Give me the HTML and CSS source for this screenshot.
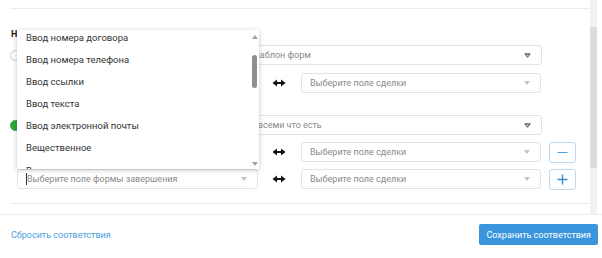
FILE: index.html
```html
<!DOCTYPE html>
<html>
<head>
    <title>Настройка соответствия полей</title>
    <link rel="stylesheet" href="styles.css">
</head>
<body>
    <div class="modal">
        <div class="modal-body">
            <div class="content">
                <div class="divider"></div>
                <h3 class="section-title">Настройка соответствия полей</h3>

                <div class="option-row">
                    <span class="radio"></span>
                    <span class="option-label">Шаблон формы</span>
                    <div class="select select-wide">
                        <span class="placeholder">Выберите шаблон форм</span>
                        <svg class="caret-outline" width="7" height="5" viewBox="0 0 7 5"><path d="M0.8 0.8 H6.2 L3.5 4.3 Z" fill="#bbb" stroke="#555" stroke-width="1" stroke-linejoin="round"/></svg>
                    </div>
                </div>

                <div class="map-row first">
                    <div class="select select-left">
                        <span class="placeholder">Выберите поле формы завершения</span>
                        <span class="caret"></span>
                    </div>
                    <svg class="link-arrow" width="14" height="8" viewBox="0 0 14 8"><path d="M4 4 H10" stroke="#111" stroke-width="2"/><path d="M0.5 4 L5 0.5 V7.5 Z M13.5 4 L9 0.5 V7.5 Z" fill="#111"/></svg>
                    <div class="select select-right">
                        <span class="placeholder">Выберите поле сделки</span>
                        <span class="caret"></span>
                    </div>
                </div>

                <div class="option-row second">
                    <span class="radio checked"></span>
                    <span class="option-label">Все поля</span>
                    <div class="select select-wide">
                        <span class="placeholder">Связать со всеми что есть</span>
                        <svg class="caret-outline" width="7" height="5" viewBox="0 0 7 5"><path d="M0.8 0.8 H6.2 L3.5 4.3 Z" fill="#bbb" stroke="#555" stroke-width="1" stroke-linejoin="round"/></svg>
                    </div>
                </div>

                <div class="map-row">
                    <div class="select select-left">
                        <span class="placeholder">Выберите поле формы завершения</span>
                        <span class="caret"></span>
                    </div>
                    <svg class="link-arrow" width="14" height="8" viewBox="0 0 14 8"><path d="M4 4 H10" stroke="#111" stroke-width="2"/><path d="M0.5 4 L5 0.5 V7.5 Z M13.5 4 L9 0.5 V7.5 Z" fill="#111"/></svg>
                    <div class="select select-right">
                        <span class="placeholder">Выберите поле сделки</span>
                        <span class="caret"></span>
                    </div>
                    <button class="icon-btn"><svg width="11" height="11" viewBox="0 0 11 11"><path d="M0.5 5.5 H10.5" stroke="#4a9fe0" stroke-width="1"/></svg></button>
                </div>

                <div class="map-row">
                    <div class="select select-left">
                        <span class="text-cursor"></span>
                        <span class="placeholder">Выберите поле формы завершения</span>
                        <span class="caret"></span>
                    </div>
                    <svg class="link-arrow" width="14" height="8" viewBox="0 0 14 8"><path d="M4 4 H10" stroke="#111" stroke-width="2"/><path d="M0.5 4 L5 0.5 V7.5 Z M13.5 4 L9 0.5 V7.5 Z" fill="#111"/></svg>
                    <div class="select select-right">
                        <span class="placeholder">Выберите поле сделки</span>
                        <span class="caret"></span>
                    </div>
                    <button class="icon-btn"><svg width="11" height="11" viewBox="0 0 11 11"><path d="M0.5 5.5 H10.5 M5.5 0.5 V10.5" stroke="#2f8fdc" stroke-width="1.4"/></svg></button>
                </div>

                <div class="divider bottom"></div>

                <!-- открытый список полей -->
                <div class="dropdown">
                    <ul class="dropdown-list">
                        <li>Ввод номера договора</li>
                        <li>Ввод номера телефона</li>
                        <li>Ввод ссылки</li>
                        <li>Ввод текста</li>
                        <li>Ввод электронной почты</li>
                        <li>Вещественное</li>
                        <li>Время</li>
                    </ul>
                    <div class="dropdown-scroll">
                        <span class="arrow-up"></span>
                        <span class="thumb"></span>
                        <span class="arrow-down"></span>
                    </div>
                </div>
            </div>
            <div class="scrollbar">
                <div class="scrollbar-thumb"></div>
            </div>
        </div>
        <div class="modal-footer">
            <a href="#" class="reset-link">Сбросить соответствия</a>
            <button class="save-btn">Сохранить соответствия</button>
        </div>
    </div>
</body>
</html>
```

FILE: styles.css
```css
/* Окно настройки соответствия */
body {
    margin: 0;
    background: #fff;
    font-family: Roboto, "Noto Sans", sans-serif;
    font-size: 9px;
    color: #333;
}

.modal {
    width: 602px;
    height: 258px;
    display: flex;
    flex-direction: column;
}

.modal-body {
    height: 214px;
    display: flex;
    border-bottom: 1px solid #ececec;
}

.content {
    position: relative;
    flex: 1;
    padding: 8px 0 0 10px;
}

.divider {
    height: 1px;
    background: #ececec;
}

.divider.bottom {
    margin-top: 14px;
}

.section-title {
    margin: 20px 0 5px 1px;
    font-size: 9px;
    line-height: 11px;
    font-weight: 700;
    color: #222;
}

.option-row {
    display: flex;
    align-items: center;
    height: 20px;
}

.option-row.second {
    margin-top: 22px;
}

.radio {
    width: 11px;
    height: 11px;
    border: 1.5px solid #c8c8d8;
    border-radius: 50%;
    box-sizing: border-box;
}

.radio.checked {
    background: #2ea83b;
    border-color: #2ea83b;
}

.option-label {
    width: 169px;
    margin-left: 10px;
    color: #333;
}

.select {
    position: relative;
    display: flex;
    align-items: center;
    height: 20px;
    box-sizing: border-box;
    padding: 0 10px 0 8px;
    border: 1px solid #e3e3e3;
    border-radius: 3px;
    background: #fff;
}

.select-wide {
    width: 342px;
}

.select-left {
    width: 241px;
}

.select-right {
    width: 240px;
}

.placeholder {
    flex: 1;
    color: #8a8a8a;
    white-space: nowrap;
}

.caret {
    width: 0;
    height: 0;
    border-left: 3.5px solid transparent;
    border-right: 3.5px solid transparent;
    border-top: 4px solid #c2c2c2;
}

.text-cursor {
    width: 1px;
    height: 12px;
    margin-left: 0;
    background: #333;
}

.map-row {
    display: flex;
    align-items: center;
    height: 20px;
    margin: 7px 0 0 7px;
}

.map-row.first {
    margin-top: 8px;
}

.link-arrow {
    margin: 0 15px 0 14px;
}

.icon-btn {
    display: flex;
    align-items: center;
    justify-content: center;
    width: 27px;
    height: 21px;
    margin-left: 8px;
    padding: 0;
    border: 1px solid #bcd8f1;
    border-radius: 3px;
    background: #fff;
}

/* выпадающий список */
.dropdown {
    position: absolute;
    left: 17px;
    top: 30px;
    width: 242px;
    height: 139px;
    display: flex;
    background: #fff;
    box-shadow: 0 1px 5px rgba(0, 0, 0, 0.22);
    overflow: hidden;
}

.dropdown-list {
    flex: 1;
    list-style: none;
    margin: -3.5px 0 0 0;
    padding: 0;
}

.dropdown-list li {
    height: 22.2px;
    line-height: 22px;
    padding-left: 9px;
    color: #333;
    font-size: 9.5px;
}

.dropdown-scroll {
    width: 9px;
    display: flex;
    flex-direction: column;
    align-items: center;
    padding: 5px 0 3px;
    box-sizing: border-box;
}

.arrow-up,
.arrow-down {
    width: 0;
    height: 0;
    border-left: 3px solid transparent;
    border-right: 3px solid transparent;
}

.arrow-up {
    border-bottom: 4px solid #a3a3a3;
}

.arrow-down {
    margin-top: auto;
    border-top: 4px solid #a3a3a3;
}

.dropdown-scroll .thumb {
    width: 5px;
    height: 33px;
    margin-top: 16px;
    border-radius: 3px;
    background: #8f8f8f;
}

/* полоса прокрутки окна */
.scrollbar {
    width: 7px;
    margin-right: 5px;
    background: #f2f2f2;
}

.scrollbar-thumb {
    height: 141px;
    margin-top: 27px;
    background: #dcdcdc;
}

.modal-footer {
    flex: 1;
    display: flex;
    align-items: center;
    justify-content: space-between;
    padding: 0 4px 4px 11px;
}

.reset-link {
    color: #4a9fe0;
    text-decoration: none;
}

.save-btn {
    height: 21px;
    padding: 0 7px;
    border: none;
    border-radius: 2px;
    background: #3a95dc;
    color: #fff;
    font-family: Roboto, "Noto Sans", sans-serif;
    font-size: 9px;
}
```
